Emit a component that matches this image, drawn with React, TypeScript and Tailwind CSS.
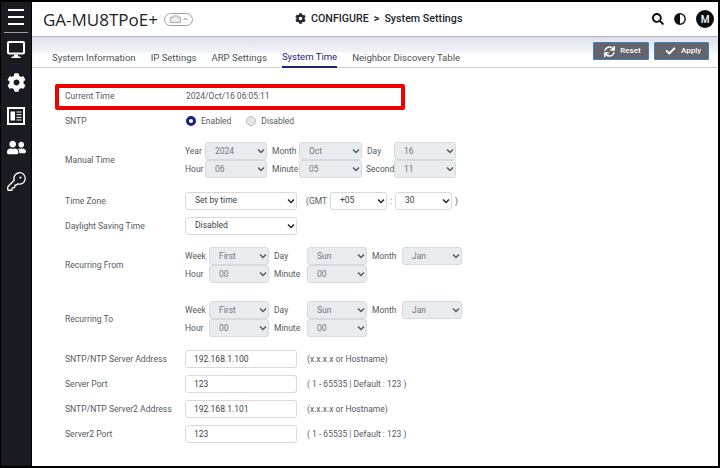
import { FaCheck, FaCog, FaSearch, FaSync, FaUserFriends } from "react-icons/fa";
import { KeyRound } from "lucide-react";
import type { ReactNode } from "react";

function Chevron({ disabled }: { disabled?: boolean }) {
  return (
    <svg
      viewBox="0 0 10 6"
      className="pointer-events-none absolute right-[1px] top-[6px] h-[6px] w-[10px]"
    >
      <path
        d="M2 1.5 5 4.5 8 1.5"
        fill="none"
        stroke={disabled ? "#555b66" : "#1f2733"}
        strokeWidth="1.5"
      />
    </svg>
  );
}

function Select({
  value,
  width,
  disabled,
}: {
  value: string;
  width: string;
  disabled?: boolean;
}) {
  return (
    <div className={`relative h-[18px] shrink-0 ${width}`}>
      <select
        disabled={disabled}
        defaultValue={value}
        className={`block h-full w-full appearance-none rounded-[3px] border border-[#d6dae0] pl-[9px] text-[8.5px] leading-none opacity-100 outline-none ${
          disabled ? "bg-[#e9ecef] text-[#70767e]" : "bg-white text-[#3d4249]"
        }`}
      >
        <option>{value}</option>
      </select>
      <Chevron disabled={disabled} />
    </div>
  );
}

function Label({ children, className = "" }: { children: ReactNode; className?: string }) {
  return <span className={`shrink-0 pt-px text-[8.5px] leading-none text-[#555a61] ${className}`}>{children}</span>;
}

function Row({
  label,
  height = "h-[25px]",
  className = "",
  children,
}: {
  label: string;
  height?: string;
  className?: string;
  children: ReactNode;
}) {
  return (
    <div className={`flex items-center ${height} ${className}`}>
      <span className="w-[120px] shrink-0 pt-px text-[8.6px] leading-none text-[#555a61]">{label}</span>
      {children}
    </div>
  );
}

function Radio({ checked, label }: { checked?: boolean; label: string }) {
  return (
    <span className="flex items-center gap-[5px]">
      <span
        className={`box-border h-[10px] w-[10px] rounded-full ${
          checked ? "border-[3px] border-[#1a237e] bg-white" : "border border-[#b9bdc4] bg-[#e3e5e9]"
        }`}
      />
      <Label>{label}</Label>
    </span>
  );
}

function ManualTime() {
  return (
    <div className="flex flex-col">
      <div className="flex h-[18px] items-center">
        <Label className="w-[20px]">Year</Label>
        <Select value="2024" width="w-[62px]" disabled />
        <Label className="ml-[5px] w-[27px]">Month</Label>
        <Select value="Oct" width="w-[63px]" disabled />
        <Label className="ml-[5px] w-[27px]">Day</Label>
        <Select value="16" width="w-[62px]" disabled />
      </div>
      <div className="flex h-[18px] items-center">
        <Label className="w-[20px]">Hour</Label>
        <Select value="06" width="w-[62px]" disabled />
        <Label className="ml-[5px] w-[27px]">Minute</Label>
        <Select value="05" width="w-[63px]" disabled />
        <Label className="ml-[4px] w-[28px]">Second</Label>
        <Select value="11" width="w-[62px]" disabled />
      </div>
    </div>
  );
}

function Recurring() {
  return (
    <div className="flex flex-col">
      <div className="flex h-[18px] items-center">
        <Label className="w-[24px]">Week</Label>
        <Select value="First" width="w-[60px]" disabled />
        <Label className="ml-[5px] w-[33px]">Day</Label>
        <Select value="Sun" width="w-[60px]" disabled />
        <Label className="ml-[5px] w-[30px]">Month</Label>
        <Select value="Jan" width="w-[60px]" disabled />
      </div>
      <div className="flex h-[18px] items-center">
        <Label className="w-[24px]">Hour</Label>
        <Select value="00" width="w-[60px]" disabled />
        <Label className="ml-[5px] w-[33px]">Minute</Label>
        <Select value="00" width="w-[60px]" disabled />
      </div>
    </div>
  );
}

function TextField({ value, hint }: { value: string; hint: string }) {
  return (
    <>
      <input
        readOnly
        value={value}
        className="h-[18px] w-[112px] shrink-0 rounded-[3px] border border-[#d6dae0] bg-white pl-[8px] text-[8.5px] text-[#3d4249] outline-none"
      />
      <span className="ml-[10px] shrink-0 pt-px text-[8.5px] leading-none text-[#555a61]">{hint}</span>
    </>
  );
}

function Sidebar() {
  return (
    <aside className="flex w-[32px] shrink-0 flex-col items-center border-x border-black bg-[#191a22] text-white">
      <div className="mt-[7px] flex h-[16px] w-[16px] flex-col justify-between">
        <span className="h-[2px] bg-white" />
        <span className="h-[2px] bg-white" />
        <span className="h-[2px] bg-white" />
      </div>
      <span className="mt-[7px] h-px w-[24px] bg-[#9a9ba0]" />
      <svg viewBox="0 0 18 18" className="mt-[8px] h-[18px] w-[18px]">
        <rect x="1" y="1" width="16" height="11.5" rx="1" fill="none" stroke="white" strokeWidth="2" />
        <path d="M7 13.5h4v2h2.5V17h-9v-1.5H7z" fill="white" />
      </svg>
      <FaCog className="mt-[14px] h-[19px] w-[19px]" />
      <svg viewBox="0 0 18 18" className="mt-[15px] h-[18px] w-[18px]">
        <rect x="1" y="1" width="16" height="16" fill="none" stroke="white" strokeWidth="2" />
        <rect x="3.5" y="4.5" width="4.5" height="9" fill="white" />
        <path d="M9.5 5h5M9.5 7.7h5M9.5 10.4h5M9.5 13h5" stroke="white" strokeWidth="1" />
      </svg>
      <FaUserFriends className="mt-[13px] h-[19px] w-[19px]" />
      <KeyRound className="mt-[14px] h-[21px] w-[21px]" strokeWidth={1.5} />
    </aside>
  );
}

function Header() {
  return (
    <header className="flex h-[34px] shrink-0 items-center bg-white pl-[11px] pr-[4px]">
      <span className="font-['Open_Sans'] text-[17px] leading-none text-[#1b1f26]">GA-MU8TPoE+</span>
      <span className="ml-[6px] flex h-[13px] w-[29px] items-center gap-[2px] rounded-full border border-[#9ea2a8] pl-[5px]">
        <svg viewBox="0 0 12 9" className="h-[8px] w-[11px]">
          <path d="M.5 2.5h3V1h5v1.5h3v6H.5z" fill="#eceded" stroke="#9a9ea4" />
        </svg>
        <svg viewBox="0 0 6 4" className="h-[4px] w-[5px]">
          <path d="M1 3l2-2 2 2" fill="none" stroke="#555" />
        </svg>
      </span>
      <div className="ml-[102px] flex items-center text-[10.7px] font-medium text-[#22262d]">
        <FaCog className="mr-[5px] h-[11px] w-[11px]" />
        <span>CONFIGURE</span>
        <span className="mx-[5px] font-bold">&gt;</span>
        <span>System Settings</span>
      </div>
      <div className="ml-auto flex items-center">
        <FaSearch className="h-[12px] w-[12px] text-[#111]" />
        <svg viewBox="0 0 12 12" className="ml-[10px] h-[12px] w-[12px]">
          <circle cx="6" cy="6" r="5.2" fill="white" stroke="#111" strokeWidth="1.4" />
          <path d="M6 .8a5.2 5.2 0 0 0 0 10.4z" fill="#111" />
        </svg>
        <span className="ml-[10px] flex h-[18px] w-[18px] items-center justify-center rounded-full bg-[#0b0b10] text-[10px] font-medium text-white">
          M
        </span>
      </div>
    </header>
  );
}

function Tabs() {
  const tabs = ["System Information", "IP Settings", "ARP Settings", "System Time", "Neighbor Discovery Table"];
  return (
    <div className="flex h-[32px] shrink-0 items-end border-b border-[#cfd1d6] bg-gradient-to-b from-[#dfe1ea] via-[#f1f3f8] to-white to-60% pl-[20px] pr-[9px] shadow-[inset_0_1px_1px_#b0b2b8]">
      <nav className="-mb-px flex gap-[15px]">
        {tabs.map((tab) => (
          <span
            key={tab}
            className={`flex h-[20px] items-center text-[9.55px] leading-none ${
              tab === "System Time"
                ? "border-b-[2px] border-[#1a237e] text-[#1a237e]"
                : "text-[#4a4f57]"
            }`}
          >
            {tab}
          </span>
        ))}
      </nav>
      <div className="mb-[7px] ml-auto flex gap-[5px]">
        <button className="flex h-[18px] w-[56px] items-center justify-center gap-[5px] rounded-[1px] border border-[#3b82c4] bg-[#63646c] pl-[3px] text-[8px] font-medium text-white">
          <FaSync className="h-[11px] w-[11px]" />
          Reset
        </button>
        <button className="flex h-[18px] w-[55px] items-center justify-center gap-[5px] rounded-[1px] border border-[#3b82c4] bg-[#63646c] pl-[3px] text-[8px] font-medium text-white">
          <FaCheck className="h-[10px] w-[11px]" />
          Apply
        </button>
      </div>
    </div>
  );
}

export default function App() {
  return (
    <div className="flex h-[468px] w-[720px] flex-col overflow-hidden bg-black font-['Roboto',sans-serif]">
      <div className="mt-[2px] mb-[2px] mr-[2px] flex min-h-0 flex-1">
        <Sidebar />
        <main className="flex min-w-0 flex-1 flex-col bg-white">
          <Header />
          <Tabs />
          <section className="pl-[33px] pt-[15px]">
            <div className="relative">
              <div className="absolute left-[-10px] top-[1px] h-[26px] w-[350px] rounded-[2px] border-[4px] border-[#f00000]" />
              <Row label="Current Time">
                <Label className="ml-[1px] text-[#4a4f57]">2024/Oct/16 06:05:11</Label>
              </Row>
            </div>
            <Row label="SNTP">
              <span className="ml-[1px] flex items-center">
                <Radio checked label="Enabled" />
                <span className="ml-[15px]">
                  <Radio label="Disabled" />
                </span>
              </span>
            </Row>
            <Row label="Manual Time" height="h-[36px]" className="mt-[9px]">
              <ManualTime />
            </Row>
            <Row label="Time Zone" className="mt-[10px]">
              <Select value="Set by time" width="w-[112px]" />
              <Label className="ml-[9px] w-[24px]">(GMT</Label>
              <Select value="+05" width="w-[57px]" />
              <Label className="mx-[3px]">:</Label>
              <Select value="30" width="w-[57px]" />
              <Label className="ml-[3px]">)</Label>
            </Row>
            <Row label="Daylight Saving Time">
              <Select value="Disabled" width="w-[112px]" />
            </Row>
            <Row label="Recurring From" height="h-[36px]" className="mt-[9px]">
              <Recurring />
            </Row>
            <Row label="Recurring To" height="h-[36px]" className="mt-[18px]">
              <Recurring />
            </Row>
            <Row label="SNTP/NTP Server Address" className="mt-[9px]">
              <TextField value="192.168.1.100" hint="(x.x.x.x or Hostname)" />
            </Row>
            <Row label="Server Port">
              <TextField value="123" hint="( 1 - 65535 | Default : 123 )" />
            </Row>
            <Row label="SNTP/NTP Server2 Address">
              <TextField value="192.168.1.101" hint="(x.x.x.x or Hostname)" />
            </Row>
            <Row label="Server2 Port">
              <TextField value="123" hint="( 1 - 65535 | Default : 123 )" />
            </Row>
          </section>
        </main>
      </div>
    </div>
  );
}
